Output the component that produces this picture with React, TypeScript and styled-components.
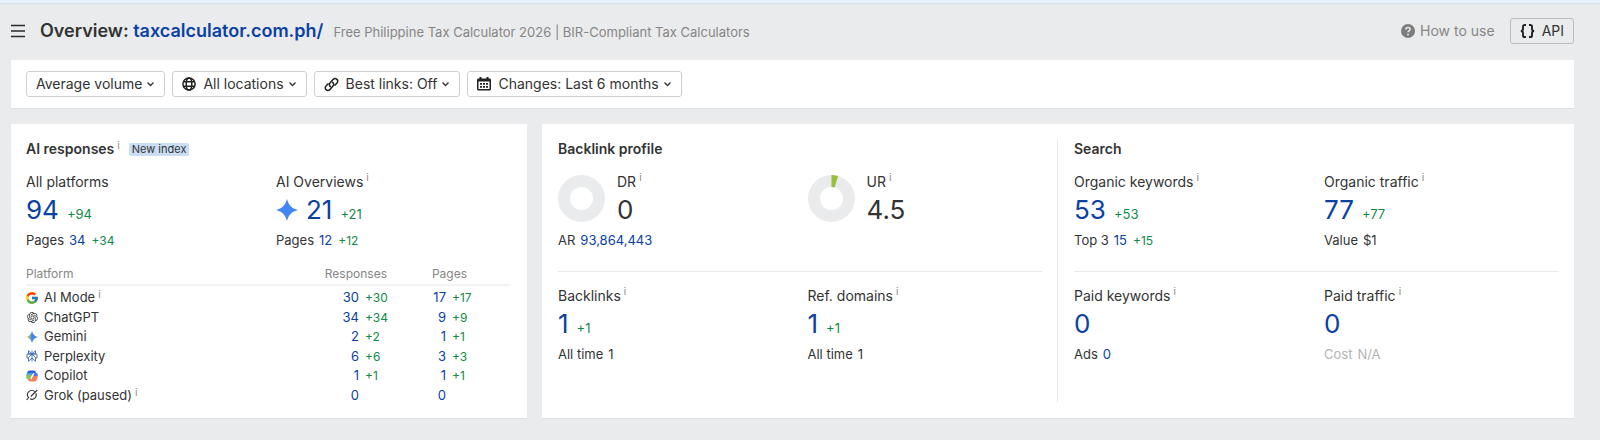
import React from "react";
import styled, { createGlobalStyle } from "styled-components";
import { FcGoogle } from "react-icons/fc";
import { RiOpenaiFill } from "react-icons/ri";

const color = {
  text: "#333333",
  link: "#0b41a2",
  gain: "#128a47",
  muted: "#868686",
  faint: "#b4b4b4",
  line: "#e8e9eb",
  page: "#eaebed",
};

const GlobalStyle = createGlobalStyle`
  *, *::before, *::after { box-sizing: border-box; }
  html, body { margin: 0; min-height: 100%; background: ${color.page}; }
  body {
    font-family: Inter, "Liberation Sans", sans-serif;
    font-size: 14px;
    line-height: 20px;
    color: ${color.text};
  }
  a { color: ${color.link}; text-decoration: none; }
  a:hover { text-decoration: underline; }
  button { font: inherit; color: inherit; cursor: pointer; }
  h1, h2, p { margin: 0; }
  svg { display: block; flex: none; }
`;

const Notice = styled.div`
  height: 4px;
  background: #e5f1fb;
  border-bottom: 1px solid #d9e2ec;
`;

const Page = styled.div`
  padding: 0 26px 22px 11px;
`;

const Header = styled.header`
  display: flex;
  align-items: center;
  height: 56px;
  padding-bottom: 2px;
`;

const MenuButton = styled.button`
  display: flex;
  padding: 0;
  margin-right: 15px;
  border: 0;
  background: none;
`;

const Title = styled.h1`
  font-size: 18px;
  line-height: 24px;
  font-weight: 600;
  white-space: nowrap;
`;

const Subtitle = styled.p`
  margin-left: 10px;
  padding-top: 2px;
  font-size: 13px;
  color: ${color.muted};
  white-space: nowrap;
`;

const HeaderActions = styled.div`
  display: flex;
  align-items: center;
  gap: 15px;
  margin-left: auto;
`;

const HelpLink = styled.a`
  display: flex;
  align-items: center;
  gap: 5px;
  && { color: ${color.muted}; }
`;

const ToolButton = styled.button<{ $filled?: boolean }>`
  display: flex;
  align-items: center;
  height: 26px;
  padding: 0 9px;
  border: 1px solid ${(p) => (p.$filled ? "#cfcfcf" : "#bcbdbf")};
  border-radius: 3px;
  background: ${(p) => (p.$filled ? "#ffffff" : "transparent")};
  white-space: nowrap;

  svg:first-child { margin-right: 7px; }
  svg:last-child { margin-left: 4px; }
`;

const Panel = styled.section`
  background: #ffffff;
  border-bottom: 1px solid #dfe2e4;
`;

const Filters = styled(Panel)`
  display: flex;
  gap: 7px;
  padding: 11px 15px;
  margin-bottom: 15px;
`;

const Cards = styled.main`
  display: grid;
  grid-template-columns: minmax(0, 1fr) minmax(0, 2fr);
  gap: 15px;
`;

const AiCard = styled(Panel)`
  padding: 15px 16px 13px 15px;
`;

const MetricsCard = styled(Panel)`
  display: grid;
  grid-template-columns: minmax(0, 1fr) minmax(0, 1fr);
  padding: 16px 0;
`;

const Half = styled.div`
  padding: 0 15px 0 16px;

  &:first-child { border-right: 1px solid ${color.line}; }
`;

const CardTitle = styled.h2`
  display: flex;
  align-items: center;
  height: 20px;
  margin-bottom: 12px;
  font-size: 14px;
  font-weight: 600;
`;

const HalfTitle = styled(CardTitle)`
  margin-top: -1px;
`;

const Info = styled.sup`
  align-self: flex-start;
  margin-left: 3px;
  font-size: 10px;
  line-height: 12px;
  font-weight: 400;
  vertical-align: top;
  color: ${color.muted};
`;

const Badge = styled.span`
  margin-left: 9px;
  padding: 0 3px;
  border-radius: 2px;
  background: #cadef3;
  font-size: 11px;
  line-height: 13px;
  font-weight: 400;
`;

const MetricRow = styled.div`
  display: grid;
  grid-template-columns: minmax(0, 1fr) minmax(0, 1fr);
  column-gap: 15px;

  & + & {
    margin-top: 21px;
    padding-top: 13px;
    border-top: 1px solid ${color.line};
  }
`;

const Label = styled.div`
  display: flex;
  height: 22px;
  line-height: 22px;
`;

const Value = styled.div`
  display: flex;
  align-items: baseline;
  font-size: 26px;
  line-height: 34px;

  svg { align-self: center; margin-right: 8px; }
`;

const Gain = styled.span<{ $small?: boolean }>`
  margin-left: ${(p) => (p.$small ? 6 : 8)}px;
  font-size: ${(p) => (p.$small ? 12 : 13)}px;
  line-height: 16px;
  color: ${color.gain};
`;

const Detail = styled.div<{ $faint?: boolean }>`
  display: flex;
  align-items: baseline;
  height: 20px;
  margin-top: 3px;
  font-size: 13px;
  color: ${(p) => (p.$faint ? color.faint : "inherit")};
`;

const DetailName = styled.span`
  margin-right: 5px;
`;

const Gauge = styled.div`
  display: flex;
  gap: 12px;

  > svg { margin-top: 4px; }
`;

const PlatformTable = styled.table`
  width: 100%;
  height: 139px;
  margin-top: 16px;
  border-collapse: separate;
  border-spacing: 0;
  table-layout: fixed;
  font-size: 13px;
  line-height: 19px;
  white-space: nowrap;

  th {
    height: 20px;
    padding: 0 0 2px;
    border-bottom: 2px solid #f3f3f4;
    font-size: 12px;
    line-height: 16px;
    font-weight: 400;
    text-align: left;
    color: ${color.muted};
  }
  td { padding: 0; }
  tbody tr:first-child td { padding-top: 2px; }
`;

const Col = styled.col<{ $w?: number }>`
  width: ${(p) => (p.$w ? `${p.$w}px` : "auto")};
`;

const NumberHead = styled.th`
  &&& { text-align: right; }
`;

const NumberCell = styled.td`
  text-align: right;
`;

const Platform = styled.span`
  display: flex;
  align-items: center;
`;

const IconSlot = styled.span`
  display: flex;
  justify-content: center;
  width: 12px;
  margin-right: 6px;
`;

const Chevron = () => (
  <svg width="9" height="8" viewBox="0 0 9 8" fill="none" stroke="#333" strokeWidth="1.3" aria-hidden>
    <path d="M1.5 2.5 4.5 5.5 7.5 2.5" />
  </svg>
);

const MenuIcon = () => (
  <svg width="14" height="14" viewBox="0 0 14 14" stroke="#2a2a2a" strokeWidth="1.7" aria-hidden>
    <path d="M0 1.500h14M0 7h14M0 12.500h14" />
  </svg>
);

const GlobeIcon = () => (
  <svg width="14" height="14" viewBox="0 0 14 14" fill="none" stroke="#222" strokeWidth="1.5" aria-hidden>
    <circle cx="7" cy="7" r="6.1" />
    <ellipse cx="7" cy="7" rx="2.8" ry="6.1" />
    <path d="M1 4.800h12M1 9.200h12" />
  </svg>
);

const LinkIcon = () => (
  <svg width="15" height="15" viewBox="0 0 24 24" fill="none" stroke="#222" strokeWidth="2.5" strokeLinecap="round" strokeLinejoin="round" aria-hidden>
    <path d="M10.200 15.500c-2-2-2-4.700 0-6.700l4.300-4.700c1.800-1.900 4.500-2 6.200-.4s1.700 4.300-.2 6.200l-2.800 3" />
    <path d="M13.800 8.500c2 2 2 4.700 0 6.700l-4.300 4.700c-1.800 1.900-4.500 2-6.200.4s-1.700-4.300.2-6.200l2.800-3" />
  </svg>
);

const CalendarIcon = () => (
  <svg width="14" height="14" viewBox="0 0 14 14" aria-hidden>
    <path fill="#222" fillRule="evenodd" d="M2.500 0h2v1.500h5V0h2v1.500h1c.8 0 1.500.7 1.500 1.500v9c0 .8-.7 1.500-1.500 1.500h-11C.7 13.500 0 12.800 0 12V3c0-.8.7-1.500 1.500-1.500h1zM1.500 4.500v7.500h11V4.500z" />
    <path fill="#222" d="M3 6h2v1.700H3zM6 6h2v1.700H6zM9 6h2v1.700H9zM3 9h2v1.700H3zM6 9h2v1.700H6zM9 9h2v1.700H9z" />
  </svg>
);

const HelpIcon = () => (
  <svg width="14" height="14" viewBox="0 0 14 14" fill="none" aria-hidden>
    <circle cx="7" cy="7" r="7" fill="#7d7d7d" />
    <path d="M4.900 5.500c0-1.200.9-2 2.100-2s2.100.8 2.100 1.900c0 1.500-2.100 1.500-2.100 2.900" stroke="#e9eaec" strokeWidth="1.500" />
    <circle cx="7" cy="10.400" r=".95" fill="#e9eaec" />
  </svg>
);

const BracesIcon = () => (
  <svg width="15" height="14" viewBox="0 0 15 14" fill="none" stroke="#222" strokeWidth="1.900" aria-hidden>
    <path d="M6 1H4.700C3.600 1 3 1.600 3 2.600v2.200C3 6 2.300 7 .8 7 2.300 7 3 8 3 9.200v2.200c0 1 .6 1.600 1.700 1.600H6" />
    <path d="M9 1h1.300C11.400 1 12 1.600 12 2.600v2.200C12 6 12.700 7 14.200 7 12.700 7 12 8 12 9.200v2.200c0 1-.6 1.600-1.700 1.600H9" />
  </svg>
);

const sparkle = "M12 0C14 7 17 10 24 12 17 14 14 17 12 24 10 17 7 14 0 12 7 10 10 7 12 0Z";

const OverviewIcon = () => (
  <svg width="22" height="22" viewBox="0 0 24 24" aria-hidden>
    <path d={sparkle} fill="#4285f4" />
  </svg>
);

const GeminiIcon = () => (
  <svg width="12" height="12" viewBox="0 0 24 24" aria-hidden>
    <defs>
      <linearGradient id="gemini" x1="0" y1="12" x2="24" y2="12" gradientUnits="userSpaceOnUse">
        <stop offset=".05" stopColor="#f2b872" />
        <stop offset=".35" stopColor="#7aa896" />
        <stop offset=".5" stopColor="#3f86e8" />
        <stop offset="1" stopColor="#3f80f5" />
      </linearGradient>
    </defs>
    <path d={sparkle} fill="url(#gemini)" />
  </svg>
);

const PerplexityIcon = () => (
  <svg width="12" height="12" viewBox="0 0 24 24" fill="none" stroke="#3b68b5" strokeWidth="1.800" aria-hidden>
    <path d="M12 1v22M5 1.500v6.500h14V1.500L12 8 5 1.500ZM12 8l-7 7v7.500l7-6.500 7 6.500V15l-7-7ZM5 16H2V8h17M19 16h3V8h-3" />
  </svg>
);

const CopilotIcon = () => (
  <svg width="12" height="12" viewBox="0 0 24 24" aria-hidden>
    <path fill="#2467cf" d="M7 1h9c2 0 3 1.500 3.500 3.500L20 6h-4c-2 0-3 1-3.500 3L11 11H1C1.500 6 3 1 7 1Z" />
    <path fill="#4aa7e0" d="M2.500 6h9.500l-1 4H1.500Z" />
    <path fill="#8cc152" d="M1.300 10h9.700l-1 4.500C9.500 17 8.500 18 6.500 18H4c-3 0-4-2-3.500-4.500Z" />
    <path fill="#5b6fd6" d="M17 6h3c3 0 4 2 3.500 4.500L23 13h-8.500L16 8.500c.2-1.500.5-2.500 1-2.500Z" />
    <path fill="#f47b5c" d="M14.500 12h8.800c-.5 5-2.300 11-6.300 11H8c-2 0-3-1.500-3.500-3.500L4 18h5c2 0 3-1 3.500-3Z" />
  </svg>
);

const GrokIcon = () => (
  <svg width="12" height="12" viewBox="0 0 24 24" fill="none" stroke="#333" strokeWidth="2.200" aria-hidden>
    <path d="M17.500 5.300A8.500 8.500 0 0 0 5.200 17L1.500 22" />
    <path d="M19.700 8.500A8.500 8.500 0 0 1 8 19.500M9.500 15 22.500 2" />
  </svg>
);

const Donut = ({ percent }: { percent: number }) => {
  const r = 17.5;
  const length = 2 * Math.PI * r;
  return (
    <svg width="47" height="47" viewBox="0 0 47 47" fill="none" strokeWidth="12" aria-hidden>
      <circle cx="23.500" cy="23.500" r={r} stroke={color.page} />
      {percent > 0 && (
        <circle
          cx="23.500"
          cy="23.500"
          r={r}
          stroke="#97bf3b"
          strokeDasharray={`${(length * percent) / 100} ${length}`}
          transform="rotate(-90 23.500 23.500)"
        />
      )}
    </svg>
  );
};

const InfoMark = () => <Info>i</Info>;

interface MetricProps {
  label: string;
  value: string;
  gain?: string;
  info?: boolean;
  icon?: React.ReactNode;
  detail: string;
  detailValue: string;
  detailLink?: boolean;
  detailGain?: string;
  faint?: boolean;
}

const Metric = (p: MetricProps) => (
  <div>
    <Label>
      {p.label}
      {p.info && <InfoMark />}
    </Label>
    <Value>
      {p.icon}
      <a href="#">{p.value}</a>
      {p.gain && <Gain>{p.gain}</Gain>}
    </Value>
    <Detail $faint={p.faint}>
      <DetailName>{p.detail}</DetailName>
      {p.detailLink ? <a href="#">{p.detailValue}</a> : <span>{p.detailValue}</span>}
      {p.detailGain && <Gain $small>{p.detailGain}</Gain>}
    </Detail>
  </div>
);

const Rating = ({ label, value, percent, rank }: { label: string; value: string; percent: number; rank?: string }) => (
  <div>
    <Gauge>
      <Donut percent={percent} />
      <div>
        <Label>
          {label}
          <InfoMark />
        </Label>
        <Value>{value}</Value>
      </div>
    </Gauge>
    {rank && (
      <Detail>
        <DetailName>AR</DetailName>
        <a href="#">{rank}</a>
      </Detail>
    )}
  </div>
);

const platforms = [
  { name: "AI Mode", icon: <FcGoogle size={14} />, info: true, responses: "30", rGain: "+30", pages: "17", pGain: "+17" },
  { name: "ChatGPT", icon: <RiOpenaiFill size={13} color="#333" />, responses: "34", rGain: "+34", pages: "9", pGain: "+9" },
  { name: "Gemini", icon: <GeminiIcon />, responses: "2", rGain: "+2", pages: "1", pGain: "+1" },
  { name: "Perplexity", icon: <PerplexityIcon />, responses: "6", rGain: "+6", pages: "3", pGain: "+3" },
  { name: "Copilot", icon: <CopilotIcon />, responses: "1", rGain: "+1", pages: "1", pGain: "+1" },
  { name: "Grok (paused)", icon: <GrokIcon />, info: true, responses: "0", pages: "0" },
];

const filters = [
  { label: "Average volume" },
  { label: "All locations", icon: <GlobeIcon /> },
  { label: "Best links: Off", icon: <LinkIcon /> },
  { label: "Changes: Last 6 months", icon: <CalendarIcon /> },
];

export default function App() {
  return (
    <>
      <GlobalStyle />
      <Notice />
      <Page>
        <Header>
          <MenuButton aria-label="Menu">
            <MenuIcon />
          </MenuButton>
          <Title>
            Overview: <a href="#">taxcalculator.com.ph/</a>
          </Title>
          <Subtitle>Free Philippine Tax Calculator 2026 | BIR-Compliant Tax Calculators</Subtitle>
          <HeaderActions>
            <HelpLink href="#">
              <HelpIcon />
              How to use
            </HelpLink>
            <ToolButton>
              <BracesIcon />
              <span>API</span>
            </ToolButton>
          </HeaderActions>
        </Header>

        <Filters>
          {filters.map((f) => (
            <ToolButton key={f.label} $filled>
              {f.icon}
              <span>{f.label}</span>
              <Chevron />
            </ToolButton>
          ))}
        </Filters>

        <Cards>
          <AiCard>
            <CardTitle>
              AI responses
              <InfoMark />
              <Badge>New index</Badge>
            </CardTitle>
            <MetricRow>
              <Metric label="All platforms" value="94" gain="+94" detail="Pages" detailValue="34" detailLink detailGain="+34" />
              <Metric label="AI Overviews" info icon={<OverviewIcon />} value="21" gain="+21" detail="Pages" detailValue="12" detailLink detailGain="+12" />
            </MetricRow>
            <PlatformTable>
              <colgroup>
                <Col />
                <Col $w={72} />
                <Col $w={28} />
                <Col $w={59} />
                <Col $w={21} />
                <Col $w={44} />
              </colgroup>
              <thead>
                <tr>
                  <th>Platform</th>
                  <NumberHead colSpan={2}>Responses</NumberHead>
                  <NumberHead colSpan={2}>Pages</NumberHead>
                  <th />
                </tr>
              </thead>
              <tbody>
                {platforms.map((p) => (
                  <tr key={p.name}>
                    <td>
                      <Platform>
                        <IconSlot>{p.icon}</IconSlot>
                        {p.name}
                        {p.info && <InfoMark />}
                      </Platform>
                    </td>
                    <NumberCell>
                      <a href="#">{p.responses}</a>
                    </NumberCell>
                    <td>{p.rGain && <Gain $small>{p.rGain}</Gain>}</td>
                    <NumberCell>
                      <a href="#">{p.pages}</a>
                    </NumberCell>
                    <td colSpan={2}>{p.pGain && <Gain $small>{p.pGain}</Gain>}</td>
                  </tr>
                ))}
              </tbody>
            </PlatformTable>
          </AiCard>

          <MetricsCard>
            <Half>
              <HalfTitle>Backlink profile</HalfTitle>
              <MetricRow>
                <Rating label="DR" value="0" percent={0} rank="93,864,443" />
                <Rating label="UR" value="4.5" percent={4.5} />
              </MetricRow>
              <MetricRow>
                <Metric label="Backlinks" info value="1" gain="+1" detail="All time" detailValue="1" />
                <Metric label="Ref. domains" info value="1" gain="+1" detail="All time" detailValue="1" />
              </MetricRow>
            </Half>
            <Half>
              <HalfTitle>Search</HalfTitle>
              <MetricRow>
                <Metric label="Organic keywords" info value="53" gain="+53" detail="Top 3" detailValue="15" detailLink detailGain="+15" />
                <Metric label="Organic traffic" info value="77" gain="+77" detail="Value" detailValue="$1" />
              </MetricRow>
              <MetricRow>
                <Metric label="Paid keywords" info value="0" detail="Ads" detailValue="0" detailLink />
                <Metric label="Paid traffic" info value="0" detail="Cost" detailValue="N/A" faint />
              </MetricRow>
            </Half>
          </MetricsCard>
        </Cards>
      </Page>
    </>
  );
}
